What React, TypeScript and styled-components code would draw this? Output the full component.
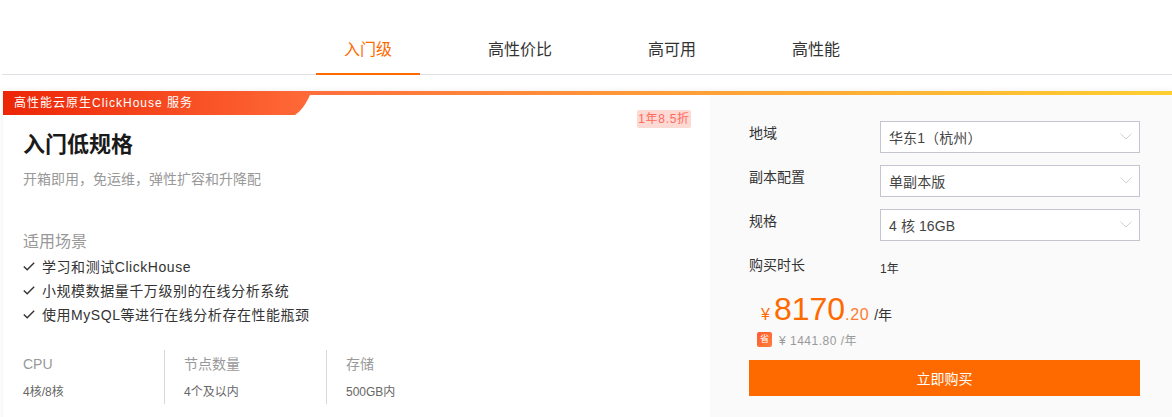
import React from "react";
import styled, { createGlobalStyle } from "styled-components";

const GlobalStyle = createGlobalStyle`
  html, body {
    margin: 0;
    padding: 0;
    background: #fff;
    overflow: hidden;
  }
  body {
    font-family: "Liberation Sans", "Noto Sans CJK SC", sans-serif;
    color: #333;
  }
`;

const Page = styled.div`
  width: 1172px;
  height: 417px;
  overflow: hidden;
  padding-left: 2px;
  box-sizing: border-box;
`;

const Tabs = styled.div`
  display: flex;
  gap: 40px;
  height: 75px;
  box-sizing: border-box;
  padding-left: 314px;
  border-bottom: 1px solid #dfdfe6;
`;

const Tab = styled.div<{ $active?: boolean }>`
  height: 75px;
  box-sizing: border-box;
  padding: 25px 28px 0;
  font-size: 16px;
  line-height: 50px;
  color: ${(p) => (p.$active ? "#ff6a00" : "#333")};
  border-bottom: 2px solid ${(p) => (p.$active ? "#ff6a00" : "transparent")};
`;

const Card = styled.div`
  position: relative;
  display: flex;
  margin: 16px 0 0 1px;
  width: 1169px;
  height: 340px;
  padding-top: 4px;
  box-sizing: border-box;
  background: #fff;
  box-shadow: 0 0 6px rgba(0, 0, 0, 0.08);
`;

const TopLine = styled.div`
  position: absolute;
  top: 0;
  left: 0;
  right: 0;
  height: 4px;
  background: linear-gradient(90deg, #ff5a2e 0%, #ff6f3c 27%, #ff9a38 55%, #ffcf30 100%);
`;

const Ribbon = styled.div`
  position: absolute;
  top: 0;
  left: 0;
  width: 307px;
  height: 24px;
  padding-left: 11px;
  box-sizing: border-box;
  font-size: 12px;
  line-height: 24px;
  letter-spacing: 1px;
  color: #fff;
  background: linear-gradient(90deg, #ec2506 0%, #ff6a38 100%);
  clip-path: path("M0 0H307V4C303 13 298 20 292 24H0Z");
`;

const Main = styled.div`
  position: relative;
  width: 707px;
  flex: none;
  padding: 0 0 0 20px;
  box-sizing: border-box;
`;

const Discount = styled.span`
  position: absolute;
  top: 15px;
  right: 19px;
  width: 54px;
  height: 18px;
  border-radius: 2px;
  background: #fdd9d4;
  color: #ff6a5c;
  font-size: 12px;
  line-height: 18px;
  letter-spacing: 0.7px;
  text-align: center;
`;

const Title = styled.h2`
  margin: 0;
  padding-top: 33px;
  font-size: 22px;
  line-height: 34px;
  font-weight: 700;
  color: #1a1a1a;
`;

const Subtitle = styled.p`
  margin: 0;
  padding-top: 6px;
  font-size: 14px;
  line-height: 22px;
  color: #999;
`;

const SectionLabel = styled.div`
  margin-top: 40px;
  font-size: 16px;
  line-height: 24px;
  color: #999;
`;

const Features = styled.ul`
  list-style: none;
  margin: 0;
  padding: 0;
`;

const Feature = styled.li`
  display: flex;
  align-items: center;
  gap: 7px;
  height: 24px;
  font-size: 14px;
  letter-spacing: 0.55px;
  color: #333;
`;

const Specs = styled.div`
  display: flex;
  margin-top: 24px;
`;

const Spec = styled.div`
  width: 141px;
  height: 54px;
  box-sizing: border-box;
  & + & {
    width: 162px;
    border-left: 1px solid #d8d8d8;
    padding-left: 19px;
  }
`;

const SpecLabel = styled.div`
  font-size: 14px;
  line-height: 28px;
  color: #999;
`;

const SpecValue = styled.div`
  font-size: 12px;
  line-height: 28px;
  color: #666;
`;

const Side = styled.div`
  flex: 1;
  background: #fafafa;
  padding: 26px 0 0 39px;
  box-sizing: border-box;
`;

const FormRow = styled.div`
  display: flex;
  height: 32px;
  margin-bottom: 12px;
`;

const DurationRow = styled(FormRow)`
  margin-bottom: 6px;
`;

const FormLabel = styled.div`
  width: 131px;
  font-size: 14px;
  line-height: 24px;
  color: #333;
`;

const Select = styled.div`
  display: flex;
  align-items: center;
  justify-content: space-between;
  width: 260px;
  height: 32px;
  box-sizing: border-box;
  border: 1px solid #c5c5d2;
  background: #fff;
  padding: 0 7px 1px 8px;
  font-size: 14px;
  color: #444;
  letter-spacing: 0.1px;
`;

const DurationValue = styled.div`
  font-size: 12px;
  line-height: 32px;
  color: #333;
`;

const PriceRow = styled.div`
  display: flex;
  align-items: baseline;
  margin: -2px 0 0 12px;
  height: 40px;
  color: #ff6a00;
`;

const Yen = styled.span`
  font-size: 16px;
  margin-right: 4px;
`;

const Amount = styled.span`
  font-size: 32px;
  line-height: 40px;
`;

const Cents = styled.span`
  font-size: 16px;
  color: #ff7a30;
  letter-spacing: 0.6px;
`;

const Unit = styled.span`
  font-size: 14px;
  color: #333;
  margin-left: 5px;
`;

const SaveRow = styled.div`
  display: flex;
  align-items: center;
  gap: 7px;
  height: 16px;
  margin: 2px 0 0 8px;
  font-size: 12px;
  letter-spacing: 0.5px;
  color: #999;
`;

const SaveIcon = styled.span`
  width: 15px;
  height: 15px;
  border-radius: 2px;
  background: linear-gradient(135deg, #ff5a2e, #ff7f3c);
  color: #fff;
  font-size: 9px;
  line-height: 15px;
  letter-spacing: 0;
  text-align: center;
`;

const BuyButton = styled.button`
  display: block;
  width: 391px;
  height: 36px;
  margin-top: 13px;
  padding: 0;
  border: 0;
  background: #ff6a00;
  color: #fff;
  font-family: inherit;
  font-size: 14px;
`;

const Chevron = () => (
  <svg width="12" height="7" viewBox="0 0 12 7" fill="none">
    <path d="M0.5 0.5L6 6L11.5 0.5" stroke="#d2d2d2" strokeWidth="1" />
  </svg>
);

const Check = () => (
  <svg width="12" height="9" viewBox="0 0 12 9" fill="none">
    <path d="M0.8 4.5L4.2 7.8L11.2 0.8" stroke="#333" strokeWidth="1.4" />
  </svg>
);

const selects = [
  { label: "地域", value: "华东1（杭州）" },
  { label: "副本配置", value: "单副本版" },
  { label: "规格", value: "4 核 16GB" },
];

const features = [
  "学习和测试ClickHouse",
  "小规模数据量千万级别的在线分析系统",
  "使用MySQL等进行在线分析存在性能瓶颈",
];

const specs = [
  { label: "CPU", value: "4核/8核" },
  { label: "节点数量", value: "4个及以内" },
  { label: "存储", value: "500GB内" },
];

export default function App() {
  return (
    <Page>
      <GlobalStyle />
      <Tabs>
        <Tab $active>入门级</Tab>
        <Tab>高性价比</Tab>
        <Tab>高可用</Tab>
        <Tab>高性能</Tab>
      </Tabs>
      <Card>
        <TopLine />
        <Ribbon>高性能云原生ClickHouse 服务</Ribbon>
        <Main>
          <Discount>1年8.5折</Discount>
          <Title>入门低规格</Title>
          <Subtitle>开箱即用，免运维，弹性扩容和升降配</Subtitle>
          <SectionLabel>适用场景</SectionLabel>
          <Features>
            {features.map((f) => (
              <Feature key={f}>
                <Check />
                {f}
              </Feature>
            ))}
          </Features>
          <Specs>
            {specs.map((s) => (
              <Spec key={s.label}>
                <SpecLabel>{s.label}</SpecLabel>
                <SpecValue>{s.value}</SpecValue>
              </Spec>
            ))}
          </Specs>
        </Main>
        <Side>
          {selects.map((s) => (
            <FormRow key={s.label}>
              <FormLabel>{s.label}</FormLabel>
              <Select>
                {s.value}
                <Chevron />
              </Select>
            </FormRow>
          ))}
          <DurationRow>
            <FormLabel>购买时长</FormLabel>
            <DurationValue>1年</DurationValue>
          </DurationRow>
          <PriceRow>
            <Yen>¥</Yen>
            <Amount>8170</Amount>
            <Cents>.20</Cents>
            <Unit>/年</Unit>
          </PriceRow>
          <SaveRow>
            <SaveIcon>省</SaveIcon>
            ¥ 1441.80 /年
          </SaveRow>
          <BuyButton>立即购买</BuyButton>
        </Side>
      </Card>
    </Page>
  );
}
